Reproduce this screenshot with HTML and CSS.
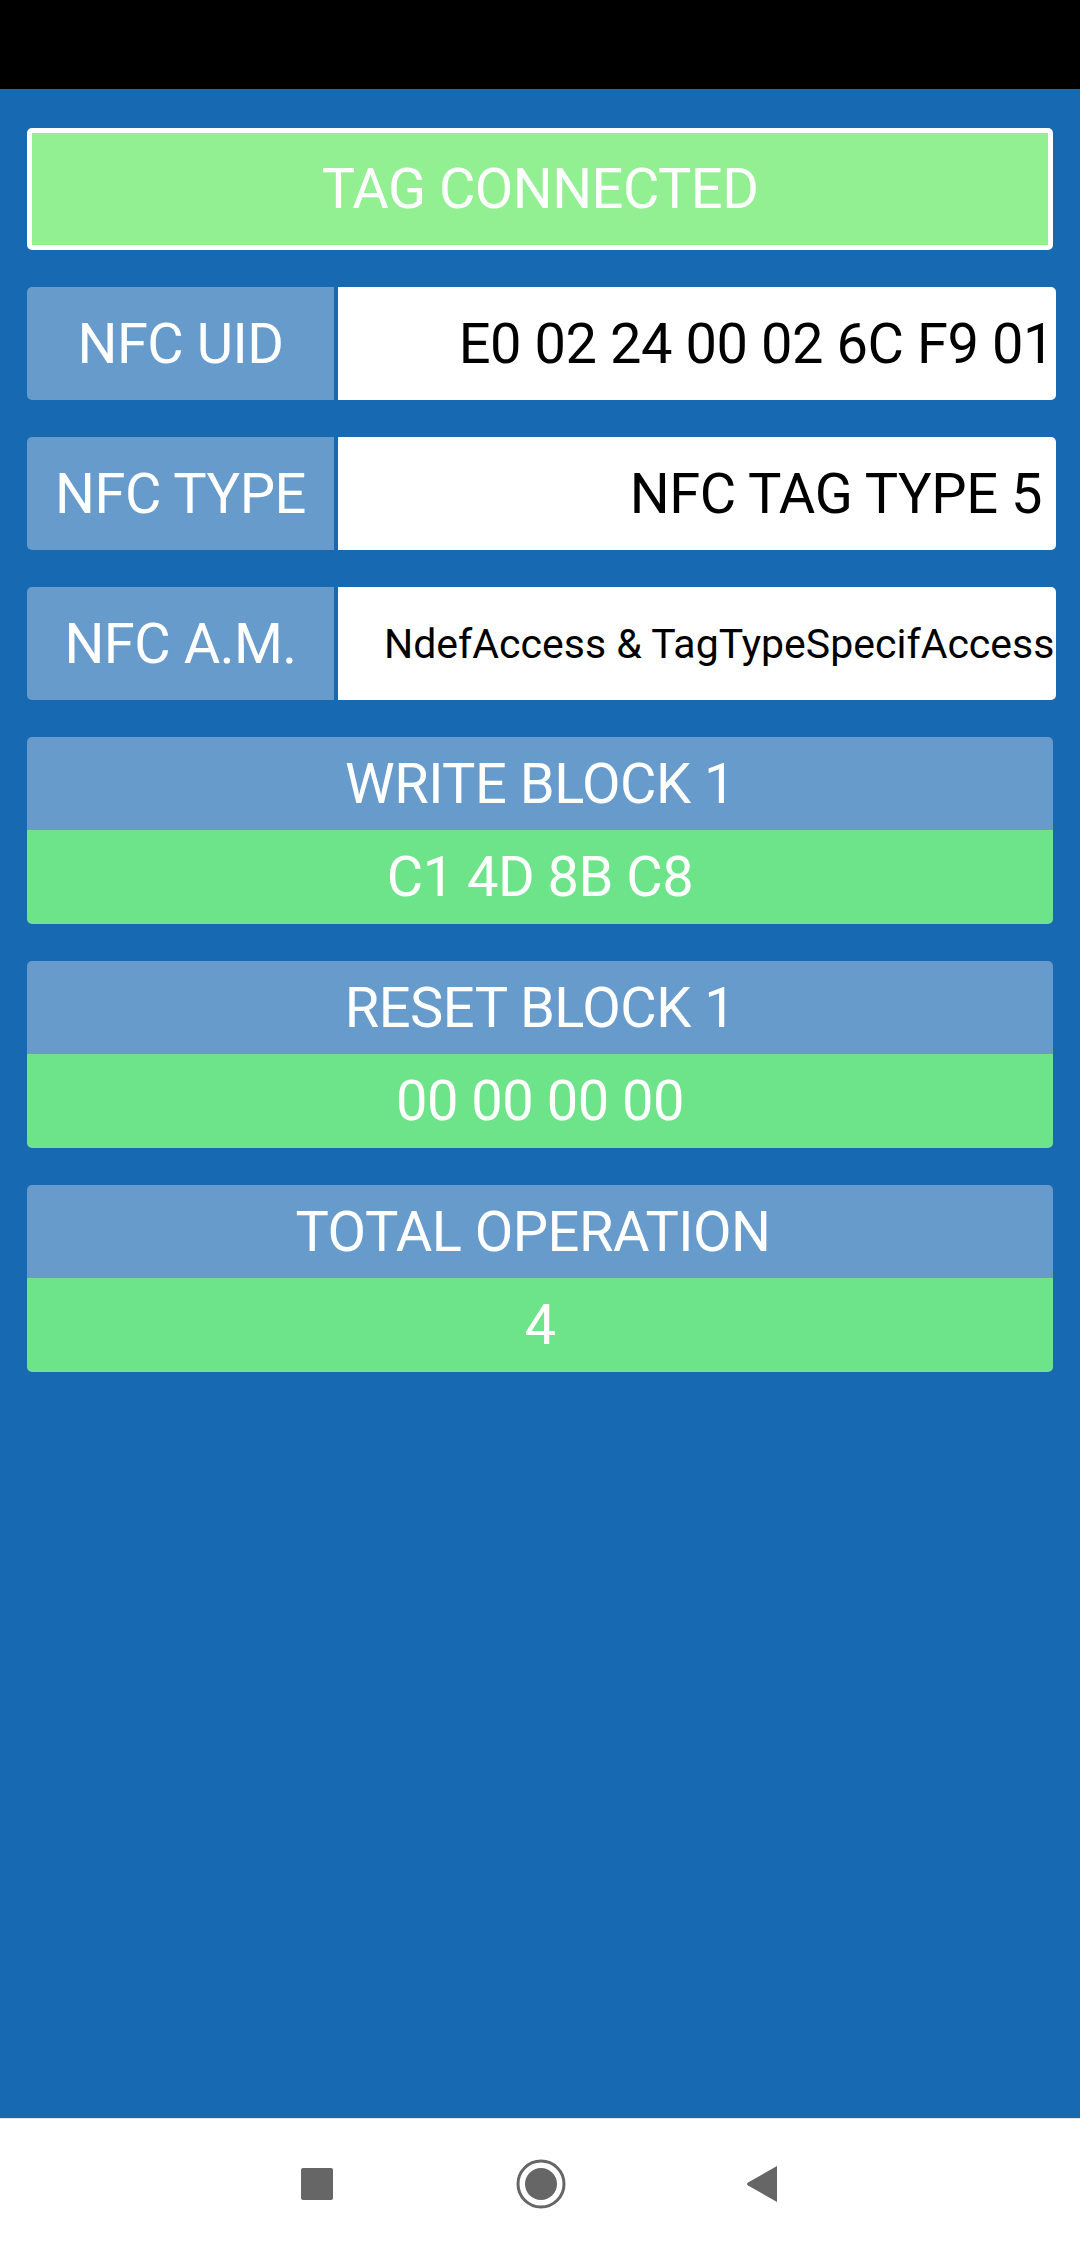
FILE: index.html
```html
<!DOCTYPE html>
<html>
<head>
<meta charset="utf-8">
<link rel="stylesheet" href="styles.css">
</head>
<body>
<div class="screen">
  <div class="statusbar"></div>
  <main class="content">
    <div class="tag-status">TAG CONNECTED</div>

    <div class="info-row">
      <div class="info-label">NFC UID</div>
      <div class="info-value uid">E0 02 24 00 02 6C F9 01</div>
    </div>
    <div class="info-row">
      <div class="info-label">NFC TYPE</div>
      <div class="info-value">NFC TAG TYPE 5</div>
    </div>
    <div class="info-row">
      <div class="info-label">NFC A.M.</div>
      <div class="info-value small">NdefAccess &amp; TagTypeSpecifAccess</div>
    </div>

    <div class="card">
      <div class="card-head">WRITE BLOCK 1</div>
      <div class="card-value">C1 4D 8B C8</div>
    </div>
    <div class="card">
      <div class="card-head">RESET BLOCK 1</div>
      <div class="card-value">00 00 00 00</div>
    </div>
    <div class="card">
      <div class="card-head total">TOTAL OPERATION</div>
      <div class="card-value">4</div>
    </div>
  </main>
  <nav class="navbar">
    <svg class="nav-icon" width="32" height="32" viewBox="0 0 32 32"><rect x="0" y="0" width="32" height="32" rx="2" fill="#666"/></svg>
    <svg class="nav-icon" width="50" height="50" viewBox="0 0 50 50"><circle cx="25" cy="25" r="23" fill="none" stroke="#666" stroke-width="3"/><circle cx="25" cy="25" r="16" fill="#666"/></svg>
    <svg class="nav-icon" width="34" height="38" viewBox="0 0 34 38"><path d="M32 1 L32 37 L3 20.5 Q1 19 3 17.5 Z" fill="#666"/></svg>
  </nav>
</div>
</body>
</html>
```

FILE: styles.css
```css
* { box-sizing: border-box; }
html, body { margin: 0; padding: 0; }
body {
  width: 1080px;
  height: 2248px;
  font-family: Roboto, "Liberation Sans", sans-serif;
  background: #176ab2;
}
.screen {
  display: flex;
  flex-direction: column;
  height: 2248px;
}
.statusbar {
  height: 89px;
  background: #000;
  flex: none;
}
.content {
  flex: 1;
  background: #176ab2;
  padding: 39px 27px 0 27px;
  display: flex;
  flex-direction: column;
  gap: 37px;
}
.tag-status {
  height: 122px;
  border: 5px solid #fff;
  border-radius: 5px;
  background: #92ef92;
  color: #fff;
  font-size: 56px;
  letter-spacing: -0.55px;
  display: flex;
  align-items: center;
  justify-content: center;
}
.info-row {
  height: 113px;
  display: flex;
  gap: 4px;
  margin-right: -3px;
}
.info-label {
  width: 307px;
  flex: none;
  background: #679bcc;
  color: #fff;
  font-size: 56px;
  letter-spacing: -0.5px;
  border-radius: 5px 0 0 5px;
  display: flex;
  align-items: center;
  justify-content: center;
}
.info-value {
  flex: 1;
  background: #fff;
  color: #000;
  font-size: 56px;
  letter-spacing: -0.45px;
  border-radius: 0 5px 5px 0;
  display: flex;
  align-items: center;
  justify-content: flex-end;
  padding-right: 14px;
  white-space: nowrap;
  overflow: hidden;
}
.info-value.uid {
  padding-right: 2px;
}
.info-value.small {
  font-size: 41px;
  letter-spacing: 0;
  justify-content: flex-start;
  padding-left: 46px;
  padding-right: 0;
}
.card {
  border-radius: 5px;
  overflow: hidden;
  display: flex;
  flex-direction: column;
}
.card-head, .card-value {
  height: 93px;
  color: #fff;
  font-size: 56px;
  letter-spacing: -0.5px;
  display: flex;
  align-items: center;
  justify-content: center;
}
.card-head { background: #679bcc; }
.card-head.total { padding-right: 14px; }
.card-value { background: #6ee48a; height: 94px; }
.navbar {
  height: 130px;
  flex: none;
  background: #fff;
  border-top: 1px solid #e6e6e6;
  display: flex;
  align-items: center;
  justify-content: center;
}
.nav-icon { display: block; }
.nav-icon:nth-child(1) { margin-right: 183px; }
.nav-icon:nth-child(2) { margin-right: 179px; }
```
